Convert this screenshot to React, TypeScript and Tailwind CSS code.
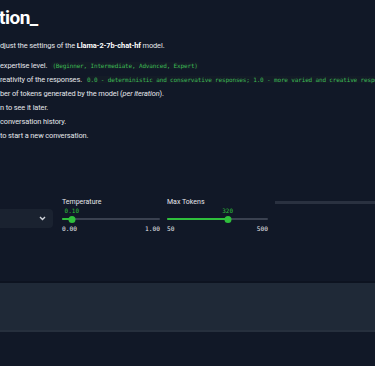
import React from "react";

const sans = { fontFamily: '"Roboto", "Liberation Sans", sans-serif' };
const mono = { fontFamily: '"DejaVu Sans Mono", monospace' };

function Code({ children }: { children: React.ReactNode }) {
  return (
    <code
      className="ml-[4px] whitespace-nowrap rounded-[2px] bg-[#141c27] px-[1px] align-baseline text-[6px] leading-none tracking-[-0.15px] text-[#3dba55]"
      style={mono}
    >
      {children}
    </code>
  );
}

function Slider({
  label,
  value,
  min,
  max,
  pct,
}: {
  label: string;
  value: string;
  min: string;
  max: string;
  pct: number;
}) {
  return (
    <div className="flex flex-col">
      <div className="h-[10px] text-[7px] leading-[10px] text-[#e5e7eb]">{label}</div>
      <div className="relative h-[18px]">
        <div
          className="absolute top-[1px] -translate-x-1/2 text-[6px] leading-[6px] text-[#2fbf3c]"
          style={{ left: `${pct}%`, ...mono }}
        >
          {value}
        </div>
        <div className="absolute left-0 right-0 top-[11px] h-[2px] rounded-full bg-[#3a4150]" />
        <div
          className="absolute left-0 top-[11px] h-[2px] rounded-full bg-[#2fbf3c]"
          style={{ width: `${pct}%` }}
        />
        <div
          className="absolute top-[8.5px] h-[7px] w-[7px] -translate-x-1/2 rounded-full bg-[#2fbf3c]"
          style={{ left: `${pct}%` }}
        />
      </div>
      <div
        className="flex h-[8px] justify-between text-[6.2px] leading-[8px] text-[#e5e7eb]"
        style={mono}
      >
        <span>{min}</span>
        <span>{max}</span>
      </div>
    </div>
  );
}

export default function App() {
  return (
    <div
      className="relative h-[366px] w-[375px] overflow-hidden bg-[#111827] text-[#e5e7eb]"
      style={sans}
    >
      <div className="h-[197px] pt-[6px]">
        <h1 className="ml-[-1px] text-[19px] font-bold leading-[24px] tracking-[-0.5px] text-white">
          tion_
        </h1>
        <p className="mt-[9px] whitespace-nowrap text-[7.4px] leading-[14px] tracking-[-0.1px]">
          djust the settings of the <b className="text-white">Llama-2-7b-chat-hf</b> model.
        </p>
        <ul className="mt-[6px] whitespace-nowrap text-[7.4px] leading-[14px] tracking-[-0.1px]">
          <li className="h-[14px]">
            expertise level.<Code>(Beginner, Intermediate, Advanced, Expert)</Code>
          </li>
          <li className="h-[14px]">
            reativity of the responses.
            <Code>
              0.0 - deterministic and conservative responses; 1.0 - more varied and creative responses
            </Code>
          </li>
          <li className="h-[14px]">
            ber of tokens generated by the model (<i>per iteration</i>).
          </li>
          <li className="h-[14px]">n to see it later.</li>
          <li className="h-[14px]">conversation history.</li>
          <li className="h-[14px]">to start a new conversation.</li>
        </ul>
      </div>

      <div className="flex h-[36px] items-start gap-[7px]">
        <div className="mt-[12px] flex h-[19px] w-[53px] items-center justify-end rounded-r-[4px] bg-[#1a2230] pr-[7px]">
          <svg width="7" height="5" viewBox="0 0 7 5">
            <path d="M1 1l2.5 2.5L6 1" stroke="#d1d5db" strokeWidth="1.4" fill="none" />
          </svg>
        </div>
        <div className="ml-[2px] w-[98px]">
          <Slider label="Temperature" value="0.10" min="0.00" max="1.00" pct={10} />
        </div>
        <div className="w-[101px]">
          <Slider label="Max Tokens" value="320" min="50" max="500" pct={60} />
        </div>
        <div className="mt-[4px] h-[3px] flex-1 bg-[#2a3140]" />
      </div>

      <div className="mt-[48px] h-[51px] border-t-[2px] border-b-[2px] border-t-[#0d1320] border-b-[#262f3d] bg-[#1f2937]" />
    </div>
  );
}
